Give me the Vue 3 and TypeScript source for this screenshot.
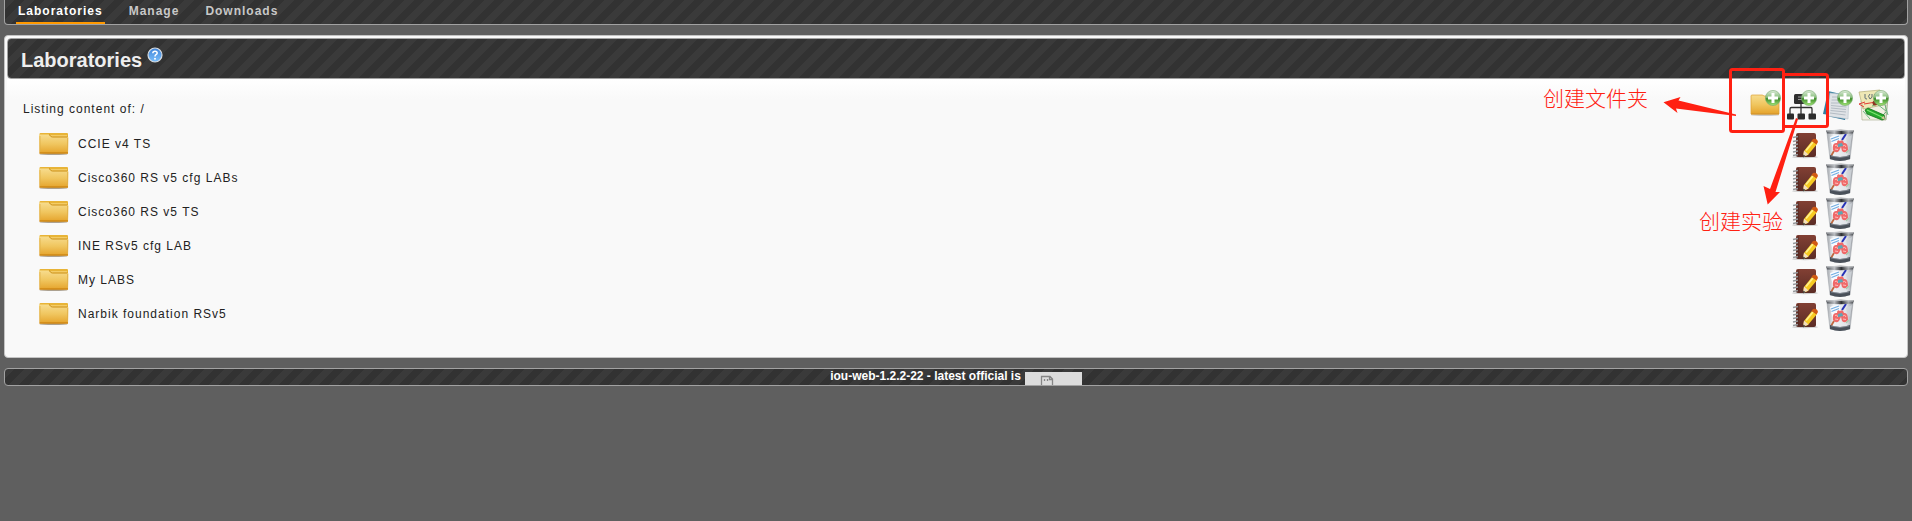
<script setup lang="ts">
interface NavItem {
  label: string
  active: boolean
}

const navItems: NavItem[] = [
  { label: 'Laboratories', active: true },
  { label: 'Manage', active: false },
  { label: 'Downloads', active: false },
]

const folders: string[] = [
  'CCIE v4 TS',
  'Cisco360 RS v5 cfg LABs',
  'Cisco360 RS v5 TS',
  'INE RSv5 cfg LAB',
  'My LABS',
  'Narbik foundation RSv5',
]

const tools: string[] = ['folder', 'lab', 'config', 'picture']
</script>

<template>
  <svg class="defs" width="0" height="0" aria-hidden="true">
    <defs>
      <linearGradient id="gFolder" x1="0" y1="0" x2="0" y2="1">
        <stop offset="0" stop-color="#f7dc8e" />
        <stop offset="0.5" stop-color="#f0c65f" />
        <stop offset="1" stop-color="#e5a32b" />
      </linearGradient>
      <linearGradient id="gPlus" x1="0" y1="0" x2="0" y2="1">
        <stop offset="0" stop-color="#dcebd9" />
        <stop offset="0.45" stop-color="#8cc080" />
        <stop offset="0.55" stop-color="#3b8b27" />
        <stop offset="1" stop-color="#a4e67a" />
      </linearGradient>
      <linearGradient id="gHelp" x1="0" y1="0" x2="0" y2="1">
        <stop offset="0" stop-color="#3f83d8" />
        <stop offset="1" stop-color="#7cc0fb" />
      </linearGradient>
      <linearGradient id="gBook" x1="0" y1="0" x2="0" y2="1">
        <stop offset="0" stop-color="#824034" />
        <stop offset="1" stop-color="#5b2c25" />
      </linearGradient>
      <linearGradient id="gMetal" x1="0" y1="0" x2="1" y2="0">
        <stop offset="0" stop-color="#4c4f55" />
        <stop offset="0.3" stop-color="#b9bcc0" />
        <stop offset="0.55" stop-color="#2d2f33" />
        <stop offset="0.8" stop-color="#a5a8ac" />
        <stop offset="1" stop-color="#44474c" />
      </linearGradient>
      <linearGradient id="gBin" x1="0" y1="0" x2="1" y2="0">
        <stop offset="0" stop-color="#a4a8ad" />
        <stop offset="0.25" stop-color="#eef1f4" />
        <stop offset="0.75" stop-color="#e0e3e8" />
        <stop offset="1" stop-color="#999da3" />
      </linearGradient>
      <symbol id="folder" viewBox="0 0 32 32">
        <ellipse cx="15.5" cy="26" rx="14" ry="1" fill="#6d5a3b" opacity=".55" />
        <path d="M1.500 6 Q1.500 5 2.500 5 H29 Q30 5 30 6 V12 H1.500Z" fill="#e8b437" />
        <path d="M12 8 L14 9 H29 V7 H12Z" fill="#f3cc66" />
        <path d="M1 7 Q1 6.500 2 6.500 H10.500 Q12 6.500 12.500 8 Q13 9 14.500 9 H29.500 Q30.500 9 30.500 10 L30 25.500 H1.500Z" fill="url(#gFolder)" />
        <path d="M11 6.500 Q12 7 12.500 8 Q13 9 14.500 9 H29.500" fill="none" stroke="#cb8f17" stroke-width="1" />
        <path d="M1.500 25 H30" stroke="#c9800e" stroke-width="1.2" />
        <path d="M2 8V24M29.500 10V24" stroke="#dfae47" stroke-width=".8" />
      </symbol>
      <symbol id="plus" viewBox="0 0 16 16">
        <circle cx="8" cy="8" r="7.6" fill="url(#gPlus)" stroke="#77a96f" stroke-width=".6" />
        <path d="M8 3V13M3 8H13" stroke="#fff" stroke-width="3" />
      </symbol>
      <symbol id="t-folder" viewBox="0 0 32 32">
        <ellipse cx="16" cy="26" rx="14" ry="1" fill="#8a8a8a" opacity=".4" />
        <path d="M2 7 Q2 6 3 6H13 Q14 6 15 7H29Q30 7 30 8V25H2Z" fill="url(#gFolder)" stroke="#dca233" stroke-width=".7" />
        <path d="M2 25H30" stroke="#d0912a" stroke-width="1" />
        <use href="#plus" x="16" y="1" width="16" height="16" />
      </symbol>
      <symbol id="t-lab" viewBox="0 0 32 32">
        <rect x="9" y="5" width="14" height="10" rx="1.5" fill="#303030" />
        <path d="M13 8H19M13 10.500H19" stroke="#999" stroke-width="1" />
        <path d="M16 14V26M5 26V20Q5 18.500 6.500 18.500H26Q27 18.500 27 20V26" fill="none" stroke="#303030" stroke-width="1.3" />
        <rect x="2" y="24.5" width="7" height="6" rx="1" fill="#2c2c2c" />
        <rect x="12.5" y="24.5" width="7.5" height="6" rx="1" fill="#2c2c2c" />
        <rect x="23.5" y="24.5" width="7.5" height="6" rx="1" fill="#2c2c2c" />
        <use href="#plus" x="16" y="1" width="16" height="16" />
      </symbol>
      <symbol id="t-config" viewBox="0 0 32 32">
        <path d="M7 2 L24 6 L22 28 L2 25Z" fill="#347fa0" />
        <path d="M6 27 L24 31 L25 26 L9 23Z" fill="#206c95" />
        <path d="M9 4 L28 6 L27 30 L6 27Z" fill="#dfe2e6" stroke="#b6c1ca" stroke-width=".6" />
        <path d="M11 8H17M10.500 11H18M10 14H18M10 16.500L25.500 18M10 19L25 20.500M9.500 21.500L25 23M9 24L24.500 26" stroke="#b4bcc4" stroke-width="1" />
        <use href="#plus" x="16" y="1" width="16" height="16" />
      </symbol>
      <symbol id="t-picture" viewBox="0 0 32 32">
        <path d="M7 3 L31 8 L29 31 L6 29Z" fill="#e9e9d9" stroke="#8d9b72" stroke-width=".7" />
        <path d="M5 31 L4 12 L29 16 L27 31Z" fill="#f1f0e2" stroke="#a6a989" stroke-width=".6" />
        <path d="M2 3 L23 1 L26 16 L6 20Z" fill="#efe8b6" stroke="#b5ad76" stroke-width=".7" />
        <path d="M8 5V9Q8 10 10 10M13 5Q10 7 13 10Q16 9 15 5M18 10V5L20 10" fill="none" stroke="#607075" stroke-width="1" />
        <path d="M2 15 L8 13 M2 15L7 18M7 15L19 13M17 11L21 15" stroke="#e33d36" stroke-width="1" fill="none" />
        <path d="M15 17L20 15L29 22M28 16L31 26M6 22L13 30M22 30L29 23" stroke="#4daa68" stroke-width=".8" fill="none" />
        <path d="M8 21 L11 19 L27 26 L28 30 L25 31 L10 25Z" fill="#27a82c" stroke="#147219" stroke-width=".8" />
        <path d="M10 21L26 28.500" stroke="#7fe36f" stroke-width="1.2" />
        <path d="M24 29L27 27L28 31Z" fill="#d9c79d" />
        <circle cx="18" cy="14" r="2.5" fill="#8c3621" />
        <use href="#plus" x="16" y="1" width="16" height="16" />
      </symbol>
      <symbol id="book" viewBox="0 0 32 32">
        <ellipse cx="15" cy="28" rx="13" ry="1.2" fill="#777" opacity=".35" />
        <rect x="6" y="4" width="20" height="24" rx="2" fill="url(#gBook)" />
        <path d="M8 5V27" stroke="#4d241d" stroke-width="1" />
        <path d="M3 8.500L8 7.500M3 12.500L8 11.500M3 16L8 15M3 19.500L8 18.500M3 23L8 22M3 26.500L8 25.500" stroke="#96989b" stroke-width="1.5" />
        <path d="M13 28 L14 22 L22 12 L27 15 L18 26Z" fill="#f6ca22" />
        <path d="M16 21.500L23 13" stroke="#fff08a" stroke-width="1.8" />
        <path d="M13 28L14 21.500L18.500 25.500Z" fill="#f4dfbd" />
        <path d="M13 28.500L13.300 25.500L15.500 27Z" fill="#333" />
        <path d="M21.500 12L23 10Q27 9 28 13L26.500 15.500Z" fill="#d15a13" />
      </symbol>
      <symbol id="bin" viewBox="0 0 32 32">
        <path d="M3 4 L6 30 Q16 33 26 30 L29 4Z" fill="url(#gBin)" stroke="#9b9ea5" stroke-width=".5" />
        <path d="M6 8L15 5L18 18L9 21Z" fill="#f9fbff" />
        <path d="M7 10L15 7M7.500 12.500L15 9.500" stroke="#72aee2" stroke-width="1.2" />
        <path d="M18 11L22 5" stroke="#2631b6" stroke-width="2" />
        <path d="M22 9L28 6L26 18L23 15Z" fill="#d0d4d9" opacity=".8" />
        <path d="M9 21Q8 13 13 14Q13 10 16 12Q19 10 20 14Q24 13 24 21Q21 25 18 22L17 18L15 22Q12 25 9 21Z" fill="#ef6a6a" />
        <path d="M11 16.500Q13 15 14 18M19 17Q21 15 22 18M11 20L14 20.500M19 20L22 20.500" fill="none" stroke="#ffbcba" stroke-width="1" />
        <path d="M14 15L18 14L19 17L14 18Z" fill="#58a9b8" />
        <path d="M7 27L10 22" stroke="#bf6840" stroke-width="1.8" />
        <path d="M22 24L25 21" stroke="#a9caaf" stroke-width="1.5" />
        <path d="M6 26Q16 30 26 26V30Q16 34 6 30Z" fill="#4a515a" />
        <path d="M7 27Q16 30 25 27" stroke="#858c96" stroke-width=".8" fill="none" />
        <path d="M2 1.500Q16 0 30 1.500L29 4.500Q16 6 3 4.500Z" fill="url(#gMetal)" />
        <path d="M3 2Q16 1 29 2" fill="none" stroke="#d6d8da" stroke-width=".8" />
      </symbol>
    </defs>
  </svg>

  <div class="page">
    <nav class="nav striped">
      <a v-for="item in navItems" :key="item.label" href="#" :class="{ active: item.active }">{{ item.label }}</a>
    </nav>

    <main class="panel">
      <header class="title striped">
        <h1>Laboratories</h1>
        <button type="button" class="help" aria-label="Help">
          <svg viewBox="0 0 16 16" width="16" height="16">
            <circle cx="8" cy="8" r="7" fill="url(#gHelp)" stroke="#d7dce1" stroke-width="1.2" />
            <path d="M5.800 6.200Q5.900 4.200 8 4.200T10.200 6Q10.200 7 9 7.700Q8 8.300 8 9.500" fill="none" stroke="#fff" stroke-width="1.5" />
            <circle cx="8" cy="11.7" r="1" fill="#fff" />
          </svg>
        </button>
      </header>

      <section class="content">
        <div class="topline">
          <p>Listing content of: /</p>
          <div class="tools">
            <button v-for="tool in tools" :key="tool" type="button" :aria-label="'Add ' + tool">
              <svg width="32" height="32"><use :href="'#t-' + tool" /></svg>
            </button>
          </div>
        </div>
        <ul class="list">
          <li v-for="name in folders" :key="name">
            <a href="#">
              <svg width="32" height="32"><use href="#folder" /></svg>
              <span>{{ name }}</span>
            </a>
            <div class="actions">
              <button type="button" :aria-label="'Edit ' + name">
                <svg width="32" height="32"><use href="#book" /></svg>
              </button>
              <button type="button" :aria-label="'Delete ' + name">
                <svg width="32" height="32"><use href="#bin" /></svg>
              </button>
            </div>
          </li>
        </ul>
      </section>

      <div class="notes">
        <svg width="392" height="180" viewBox="0 0 392 180" fill="#ff2012">
          <rect x="210.500" y="9.500" width="53" height="62" rx="2" fill="none" stroke="#ff2012" stroke-width="3" />
          <rect x="263.500" y="14.500" width="44" height="52" rx="2" fill="none" stroke="#ff2012" stroke-width="3" />
          <path d="M143.500 42.300L160.500 37L158.500 40.500L216 54.500V56L156 48.500L157.500 53Z" />
          <path d="M247.700 144.500L243.500 126L250 129L276 58L278 59L255.500 132L260 132Z" />
        </svg>
        <span class="note note-folder">创建文件夹</span>
        <span class="note note-lab">创建实验</span>
      </div>
    </main>

    <footer class="footer striped">
      <span>iou-web-1.2.2-22 - latest official is</span>
      <svg class="badge" width="57" height="14" viewBox="0 0 57 14" role="img" aria-label="Version">
        <rect width="57" height="14" fill="#dcdcdc" />
        <path d="M16.500 14V4.500H25L27.500 7V14M24.500 4.500V7.500H27.500M19.500 7V9M22.500 7V9" fill="none" stroke="#858585" stroke-width="1.3" />
      </svg>
    </footer>
  </div>
</template>

<style>
html {
  background: #5f5f5f;
}
body {
  margin: 0;
}
</style>

<style scoped>
.defs {
  position: absolute;
}
.page {
  padding: 0 4px;
  font-family: "Liberation Sans", Arial, "Noto Sans CJK SC", sans-serif;
  font-size: 12px;
  color: #222;
}
.striped {
  box-sizing: border-box;
  border: 1px solid #a2a2a2;
  border-radius: 4px;
  background: linear-gradient(135deg, #3a3a3a 25%, #323232 25% 50%, #3a3a3a 50% 75%, #323232 75%) 0 0 / 20px 20px;
}
.nav {
  display: flex;
  gap: 22px;
  height: 25px;
  padding: 0 11px;
  border-top: 0;
  border-radius: 0 0 4px 4px;
}
.nav a {
  height: 22px;
  padding: 0 2px;
  border-bottom: 2px solid transparent;
  font-weight: bold;
  line-height: 22px;
  letter-spacing: 1px;
  color: #c8c8c8;
  text-decoration: none;
}
.nav a.active {
  color: #fff;
  border-color: #ff9900;
}
.panel {
  position: relative;
  margin-top: 10px;
  padding: 2px;
  border: 1px solid #c4c4c4;
  border-radius: 4px;
  background: #f9f9f9;
}
.title {
  display: flex;
  gap: 5px;
  height: 41px;
  padding: 0 13px;
}
h1 {
  margin: 0;
  font-size: 20px;
  line-height: 42px;
  color: #eee;
}
button {
  display: block;
  padding: 0;
  border: 0;
  background: none;
  cursor: pointer;
}
svg {
  display: block;
}
.help {
  align-self: flex-start;
  margin-top: 8px;
}
.content {
  padding: 10px 16px 24px;
  background: linear-gradient(#fff, #f9f9f9 20px);
  letter-spacing: 1px;
}
.topline {
  display: flex;
  justify-content: space-between;
  align-items: flex-end;
}
.topline p {
  margin: 0;
  line-height: 24px;
}
.tools {
  display: flex;
  gap: 4px;
}
.list {
  margin: 6px 0 0;
  padding: 0 33px 0 15px;
  list-style: none;
}
.list li {
  display: flex;
  justify-content: space-between;
  height: 34px;
}
.list a {
  display: flex;
  align-items: center;
  gap: 8px;
  color: inherit;
  line-height: 34px;
  text-decoration: none;
}
.actions {
  display: flex;
  gap: 2px;
  padding-top: 2px;
}
.notes {
  position: absolute;
  top: 24px;
  right: -5px;
  width: 392px;
  height: 180px;
  pointer-events: none;
}
.note {
  position: absolute;
  font-family: "Noto Sans CJK SC", sans-serif;
  font-size: 21px;
  font-weight: 300;
  line-height: 24px;
  white-space: nowrap;
  color: #ff2012;
}
.note-folder {
  top: 25px;
  left: 23px;
}
.note-lab {
  top: 148px;
  left: 179px;
}
.footer {
  display: flex;
  justify-content: center;
  gap: 4px;
  height: 18px;
  margin-top: 10px;
  overflow: hidden;
  font-weight: bold;
  line-height: 15px;
  color: #fff;
}
.badge {
  margin-top: 3px;
}
</style>
